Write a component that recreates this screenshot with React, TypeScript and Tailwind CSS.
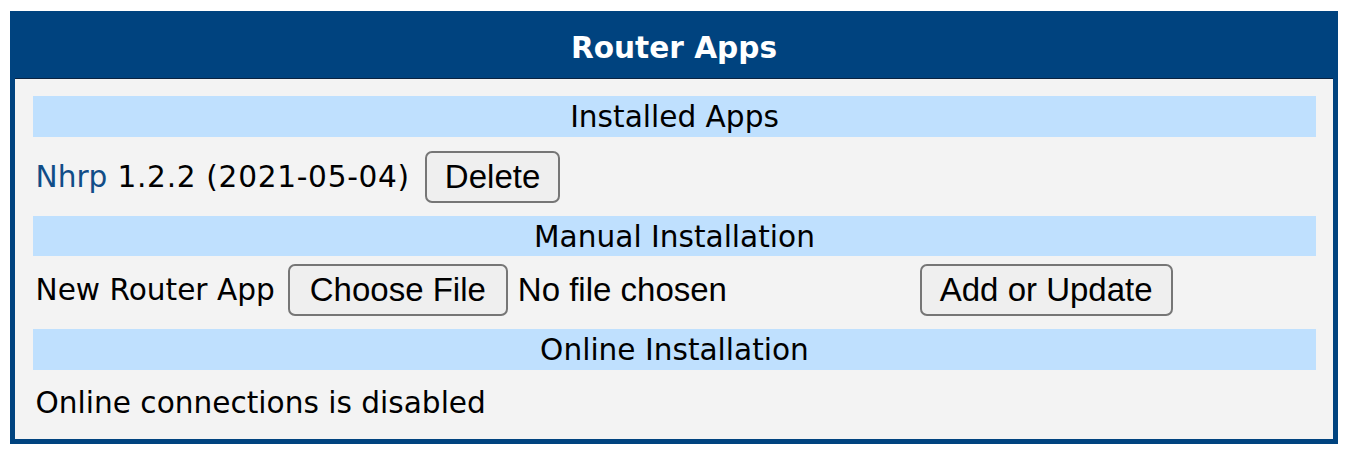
import type { ReactNode } from "react";

function SectionBar({ children }: { children: ReactNode }) {
  return (
    <div
      className="
        flex
        h-[41px]
        items-start
        justify-center
        bg-[#bfe0fe]
        pt-[4px]
        leading-[34px]
        text-black
      "
    >
      {children}
    </div>
  );
}

function NativeButton({
  children,
  wide,
}: {
  children: ReactNode;
  wide?: boolean;
}) {
  return (
    <button
      type="button"
      className={[
        `
          flex
          h-[52px]
          shrink-0
          items-center
          rounded-[7px]
          border-2
          border-[#767676]
          bg-[#efefef]
          pb-[2px]
          font-['Liberation_Sans',Arial,sans-serif]
          text-[33px]
          leading-none
          text-black
        `,
        wide ? "px-[20px]" : "px-[18px]",
      ].join(" ")}
    >
      {children}
    </button>
  );
}

export default function App() {
  return (
    <div
      className="
        min-h-[451px]
        bg-white
        pt-[11px]
        pl-[10px]
        font-['DejaVu_Sans',Verdana,sans-serif]
        text-[29.6px]
        text-black
      "
    >
      <div
        className="
          w-[1328px]
          border-[5px]
          border-[#00437f]
          bg-[#00437f]
        "
      >
        <div
          className="
            flex
            h-[62px]
            justify-center
            pt-[15px]
            font-bold
            leading-[34px]
            text-white
          "
        >
          Router Apps
        </div>

        <div
          className="
            h-[361px]
            border-t
            border-[#0b2340]
            bg-[#f3f3f3]
            pt-[17px]
            pr-[17px]
            pl-[18px]
          "
        >
          <SectionBar>Installed Apps</SectionBar>

          <div
            className="
              h-[79px]
              pt-[14px]
              pl-[2.5px]
            "
          >
            <div
              className="
                flex
                h-[52px]
                items-center
                whitespace-pre
              "
            >
              <span className="text-[#114d87]">Nhrp</span>
              <span className="tracking-[0.7px]"> 1.2.2 (2021-05-04)</span>
              <div className="ml-[15px]">
                <NativeButton>Delete</NativeButton>
              </div>
            </div>
          </div>

          <div
            className="
              [&>div]:h-[40px]
            "
          >
            <SectionBar>Manual Installation</SectionBar>
          </div>

          <div
            className="
              h-[73px]
              pt-[8px]
              pl-[2.5px]
            "
          >
            <div
              className="
                flex
                h-[52px]
                items-center
                whitespace-pre
              "
            >
              <span>New Router App</span>

              <div
                className="
                  ml-[13px]
                  flex
                  w-[622px]
                  items-center
                "
              >
                <NativeButton wide>Choose File</NativeButton>
                <span
                  className="
                    ml-[10px]
                    font-['Liberation_Sans',Arial,sans-serif]
                    text-[33px]
                  "
                >
                  No file chosen
                </span>
              </div>

              <div className="ml-[10px]">
                <NativeButton>Add or Update</NativeButton>
              </div>
            </div>
          </div>

          <SectionBar>Online Installation</SectionBar>

          <div
            className="
              pt-[15.5px]
              pl-[2.5px]
              leading-[34.5px]
            "
          >
            Online connections is disabled
          </div>
        </div>
      </div>
    </div>
  );
}
